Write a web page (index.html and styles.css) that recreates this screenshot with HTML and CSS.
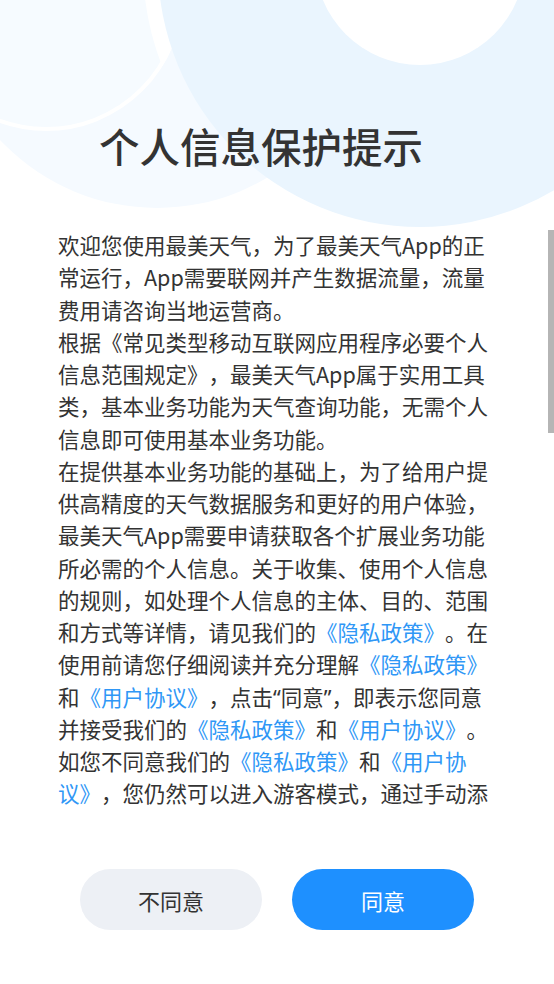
FILE: index.html
```html
<!DOCTYPE html>
<html lang="zh-CN">
<head>
<meta charset="utf-8">
<title>个人信息保护提示</title>
<link rel="stylesheet" href="styles.css">
</head>
<body>
<div class="page">
  <svg class="bg" viewBox="0 0 554 240" width="554" height="240" aria-hidden="true">
    <defs>
      <clipPath id="clipB"><circle cx="46" cy="-6" r="137"/></clipPath>
    </defs>
    <circle cx="157" cy="-7" r="215" fill="#f5faff"/>
    <circle cx="46" cy="-6" r="135" fill="#f6fbff" stroke="#ffffff" stroke-width="4"/>
    <circle cx="420" cy="-35" r="269" fill="none" stroke="#ffffff" stroke-width="16" clip-path="url(#clipB)"/>
    <circle cx="420" cy="-35" r="262" fill="#eaf5fe"/>
    <circle cx="420" cy="-40" r="105" fill="#ffffff"/>
  </svg>

  <h1 class="title">个人信息保护提示</h1>

  <div class="scroll-wrap">
    <div class="scroll">
      <p>欢迎您使用最美天气，为了最美天气App的正常运行，App需要联网并产生数据流量，流量费用请咨询当地运营商。</p>
      <p>根据《常见类型移动互联网应用程序必要个人信息范围规定》，最美天气App属于实用工具类，基本业务功能为天气查询功能，无需个人信息即可使用基本业务功能。</p>
      <p>在提供基本业务功能的基础上，为了给用户提供高精度的天气数据服务和更好的用户体验，最美天气App需要申请获取各个扩展业务功能所必需的个人信息。关于收集、使用个人信息的规则，如处理个人信息的主体、目的、范围和方式等详情，请见我们的<a class="link">《隐私政策》</a>。在使用前请您仔细阅读并充分理解<a class="link">《隐私政策》</a>和<a class="link">《用户协议》</a>，点击<span class="q">“</span>同意<span class="q">”</span>，即表示您同意并接受我们的<a class="link">《隐私政策》</a>和<a class="link">《用户协议》</a>。如您不同意我们的<a class="link">《隐私政策》</a>和<a class="link">《用户协议》</a>，您仍然可以进入游客模式，通过手动添加城市使用基本的天气查询功能。</p>
    </div>
    <div class="thumb"></div>
  </div>

  <div class="actions">
    <button class="btn btn-ghost" type="button">不同意</button>
    <button class="btn btn-primary" type="button">同意</button>
  </div>
</div>
</body>
</html>
```

FILE: styles.css
```css
html, body {
  margin: 0;
  padding: 0;
  background: #ffffff;
}

body {
  width: 554px;
  height: 984px;
  overflow: hidden;
  font-family: "Noto Sans CJK SC", "Noto Sans", sans-serif;
  color: #333333;
}

.page {
  position: relative;
  width: 554px;
  height: 984px;
  padding-top: 118px;
  box-sizing: border-box;
  display: flex;
  flex-direction: column;
}

.bg {
  position: absolute;
  left: 0;
  top: 0;
  z-index: 0;
}

.title {
  position: relative;
  z-index: 1;
  margin: 0;
  padding-right: 32px;
  font-size: 40.5px;
  line-height: 56px;
  font-weight: 500;
  text-align: center;
  color: #333333;
}

.scroll-wrap {
  position: relative;
  z-index: 1;
  margin-top: 55px;
  height: 580px;
}

.scroll {
  height: 100%;
  overflow: hidden;
  padding-left: 58px;
  width: 438px;
}

.scroll p {
  margin: 0;
  font-size: 21.5px;
  line-height: 32.25px;
  color: #333333;
  text-spacing-trim: space-all;
}

.link {
  color: #2f97f6;
  text-decoration: none;
}

.q {
  font-family: "Noto Sans", sans-serif;
  line-height: 1;
}

.thumb {
  position: absolute;
  right: 0;
  top: 1px;
  width: 6px;
  height: 203px;
  background: #b5b5b5;
}

.actions {
  position: relative;
  z-index: 1;
  margin-top: 60px;
  display: flex;
  justify-content: center;
  gap: 30px;
}

.btn {
  width: 182px;
  height: 61px;
  border: none;
  border-radius: 31px;
  font-family: "Noto Sans CJK SC", "Noto Sans", sans-serif;
  font-size: 22px;
  padding: 0;
}

.btn-ghost {
  background: #edf0f5;
  color: #333333;
}

.btn-primary {
  background: #1e90ff;
  color: #ffffff;
}
```
